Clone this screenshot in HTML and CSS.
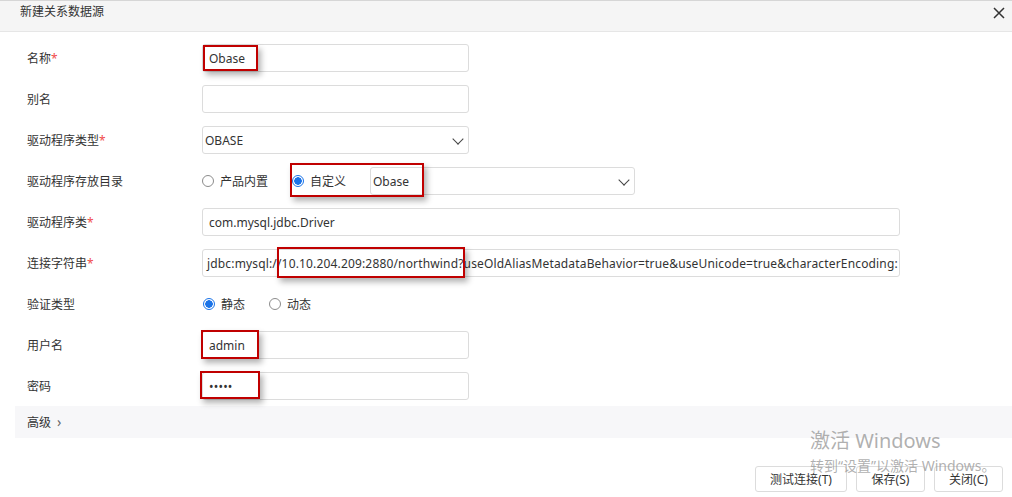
FILE: index.html
```html
<!DOCTYPE html>
<html lang="zh-CN">

<head>
    <meta charset="UTF-8">
    <meta name="viewport" content="width=device-width, initial-scale=1.0">
    <title>新建关系数据源</title>
    <link rel="stylesheet" href="styles.css">
</head>

<body>
    <div class="dialog">
        <div class="header">
            <span class="title">新建关系数据源</span>
            <svg class="close" width="12" height="12" viewBox="0 0 12 12">
                <path d="M1 1L11 11M11 1L1 11" stroke="#333" stroke-width="1.5" fill="none" />
            </svg>
        </div>

        <div class="form">
            <div class="row">
                <div class="label">名称<span class="req">*</span></div>
                <div class="input short">Obase</div>
            </div>
            <div class="row">
                <div class="label">别名</div>
                <div class="input short"></div>
            </div>
            <div class="row">
                <div class="label">驱动程序类型<span class="req">*</span></div>
                <div class="input short select">OBASE<span class="chev"></span></div>
            </div>
            <div class="row">
                <div class="label">驱动程序存放目录</div>
                <div class="radio-group">
                    <span class="radio"></span><span class="radio-text">产品内置</span>
                    <span class="radio checked"></span><span class="radio-text">自定义</span>
                </div>
                <div class="input short select dir">Obase<span class="chev"></span></div>
            </div>
            <div class="row">
                <div class="label">驱动程序类<span class="req">*</span></div>
                <div class="input long">com.mysql.jdbc.Driver</div>
            </div>
            <div class="row">
                <div class="label">连接字符串<span class="req">*</span></div>
                <div class="input long url">jdbc:mysql://10.10.204.209:2880/northwind?useOldAliasMetadataBehavior=true&amp;useUnicode=true&amp;characterEncoding:</div>
            </div>
            <div class="row">
                <div class="label">验证类型</div>
                <div class="radio-group auth">
                    <span class="radio checked"></span><span class="radio-text">静态</span>
                    <span class="radio"></span><span class="radio-text">动态</span>
                </div>
            </div>
            <div class="row">
                <div class="label">用户名</div>
                <div class="input short">admin</div>
            </div>
            <div class="row">
                <div class="label">密码</div>
                <div class="input short pwd">•••••</div>
            </div>
        </div>

        <div class="advanced">高级 <span class="arrow">›</span></div>

        <div class="footer">
            <button class="btn test">测试连接(T)</button>
            <button class="btn">保存(S)</button>
            <button class="btn">关闭(C)</button>
        </div>
    </div>

    <div class="mark m1"></div>
    <div class="mark m2"></div>
    <div class="mark m3"></div>
    <div class="mark m4"></div>
    <div class="mark m5"></div>

    <div class="watermark">
        <div class="wm-big">激活 Windows</div>
        <div class="wm-small">转到“设置”以激活 Windows。</div>
    </div>
</body>

</html>
```

FILE: styles.css
```css
body {
    margin: 0;
    position: relative;
    width: 1012px;
    height: 497px;
    overflow: hidden;
    background-color: #fff;
    font-family: 'Noto Sans', 'Noto Sans CJK SC', sans-serif;
    font-size: 12px;
    color: #333;
}

.dialog {
    border-top: 1px solid #d6d6d6;
}

.header {
    height: 31px;
    background-color: #f5f5f5;
    border-bottom: 1px solid #e6e6e6;
    display: flex;
    justify-content: space-between;
    padding: 3px 7px 0 20px;
    box-sizing: border-box;
}

.title {
    line-height: 16px;
}

.close {
    margin-top: 3px;
}

.form {
    padding: 12px 0 0 27px;
}

.row {
    display: flex;
    align-items: center;
    height: 28px;
    margin-bottom: 13px;
}

.row:last-child {
    margin-bottom: 0;
}

.label {
    width: 175px;
    flex-shrink: 0;
}

.req {
    color: #f04b4b;
}

.input {
    height: 28px;
    box-sizing: border-box;
    border: 1px solid #dcdcdc;
    border-radius: 3px;
    padding: 0 6px;
    display: flex;
    align-items: center;
    white-space: nowrap;
    overflow: hidden;
    position: relative;
}

.short {
    width: 267px;
}

.long {
    width: 698px;
}

.url {
    padding-left: 4px;
    letter-spacing: 0.16px;
}

.select {
    padding-left: 2px;
}

.dir {
    width: 265px;
}

.chev {
    position: absolute;
    right: 6px;
    top: 8px;
    width: 7px;
    height: 7px;
    border-right: 1.3px solid #444;
    border-bottom: 1.3px solid #444;
    transform: rotate(45deg);
}

.pwd {
    font-size: 12px;
    letter-spacing: 0.2px;
}

.radio-group {
    display: flex;
    align-items: center;
    width: 168px;
}

.auth .radio:first-child {
    margin-left: 1px;
}

.radio {
    width: 12px;
    height: 12px;
    box-sizing: border-box;
    border: 1px solid #8c8c8c;
    border-radius: 50%;
    margin-right: 6px;
    flex-shrink: 0;
}

.radio.checked {
    border-color: #1a73e8;
    background: radial-gradient(circle, #1a73e8 0 3.5px, #fff 4px);
}

.radio-text {
    margin-right: 24px;
}

.advanced {
    margin: 6px 0 0 15px;
    height: 32px;
    background-color: #f7f7f9;
    padding-left: 12px;
    display: flex;
    align-items: center;
    gap: 6px;
}

.arrow {
    color: #666;
    font-size: 14px;
    margin-top: -2px;
}

.footer {
    display: flex;
    justify-content: flex-end;
    gap: 9px;
    padding: 28px 9px 0 0;
}

.btn {
    height: 26px;
    width: 69px;
    background-color: #fff;
    border: 1px solid #dcdcdc;
    border-radius: 3px;
    font-family: 'Noto Sans', 'Noto Sans CJK SC', sans-serif;
    font-size: 12px;
    color: #333;
    padding: 0;
}

.btn.test {
    width: 92px;
}

.mark {
    position: absolute;
    box-sizing: border-box;
    border: 2px solid #c00000;
    box-shadow: 3px 4px 6px rgba(0, 0, 0, 0.3);
}

.m1 { left: 203px; top: 45px; width: 55px; height: 26px; }
.m2 { left: 290px; top: 163px; width: 134px; height: 34px; }
.m3 { left: 277px; top: 247px; width: 188px; height: 31px; }
.m4 { left: 201px; top: 330px; width: 58px; height: 29px; }
.m5 { left: 200px; top: 371px; width: 60px; height: 28px; }

.watermark {
    position: absolute;
    left: 810px;
    top: 427px;
    color: rgba(150, 150, 150, 0.75);
}

.wm-big {
    font-size: 20px;
    line-height: 28px;
}

.wm-small {
    font-size: 14px;
    line-height: 20px;
    margin-top: 1px;
}
```
